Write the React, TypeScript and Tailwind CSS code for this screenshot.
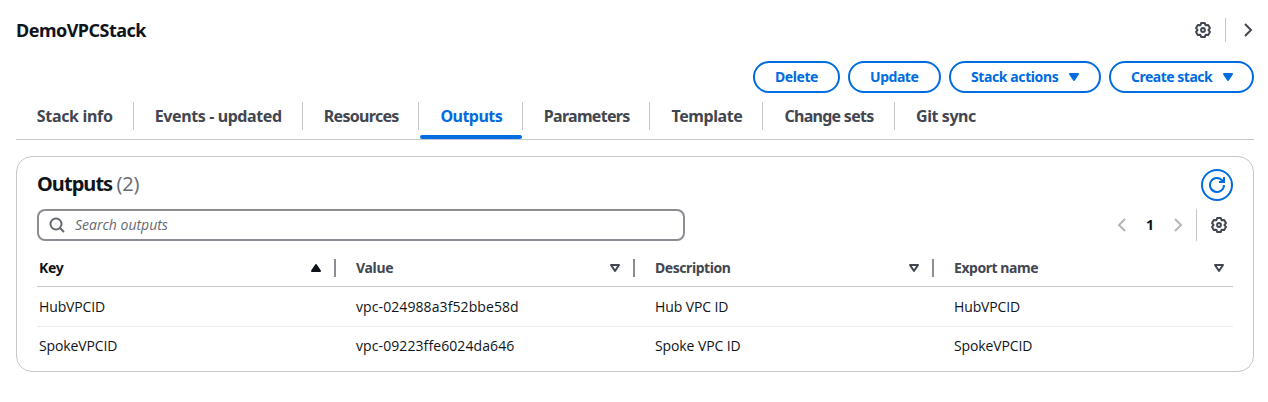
import type { ReactNode } from 'react';

function Gear() {
  return (
    <svg viewBox="0 0 16 16" className="size-4 shrink-0 text-[#424650]" fill="none" stroke="currentColor" strokeWidth="2" strokeLinejoin="round">
      <path d="M6.26 1h3.48l.96 2.32L13.18 3l1.74 3.02L13.4 8l1.52 1.98L13.18 13l-2.48-.32L9.74 15H6.26l-.96-2.32-2.48.32-1.74-3.02L2.6 8 1.08 6.02 2.82 3l2.48.32z" />
      <circle cx="8" cy="8" r="1.9" />
    </svg>
  );
}

function Chevron({ left, className }: { left?: boolean; className: string }) {
  return (
    <svg viewBox="0 0 16 16" className={`size-4 shrink-0 ${className}`} fill="none" stroke="currentColor" strokeWidth="2">
      <path d={left ? 'M11 2 5 8l6 6' : 'm5 2 6 6-6 6'} />
    </svg>
  );
}

function Refresh() {
  return (
    <svg viewBox="0 0 16 16" className="size-4" fill="none" stroke="currentColor" strokeWidth="2">
      <path d="M15 8a7 7 0 1 1-2.2-5.1L15 5" />
      <path d="M10 5h5V0" />
    </svg>
  );
}

function CaretDown() {
  return (
    <svg viewBox="0 0 16 16" className="size-4" fill="currentColor" stroke="currentColor" strokeWidth="2" strokeLinejoin="round">
      <path d="M4 5h8l-4 6z" />
    </svg>
  );
}

function SortMark({ asc }: { asc?: boolean }) {
  return (
    <svg viewBox="0 0 16 16" className="size-4 shrink-0" fill={asc ? 'currentColor' : 'none'} stroke="currentColor" strokeWidth="2" strokeLinejoin="round">
      <path d={asc ? 'M4 11h8L8 5z' : 'M4 5h8l-4 6z'} />
    </svg>
  );
}

function PillButton({ className, children }: { className: string; children: ReactNode }) {
  return (
    <button className={`flex h-8 items-center rounded-full border-2 border-[#006ce0] pl-5 text-sm font-[660] text-[#006ce0] ${className}`}>
      {children}
    </button>
  );
}

const tabs = [
  { label: 'Stack info', cls: 'w-[118px] pl-[20.8px] tracking-[-0.33px]' },
  { label: 'Events - updated', cls: 'w-[169px] pl-[20.8px] tracking-[-0.4px]' },
  { label: 'Resources', cls: 'w-[116px] pl-[20.8px] tracking-[-0.7px]' },
  { label: 'Outputs', cls: 'w-[104px] pl-[21.5px] tracking-[-0.55px]', active: true },
  { label: 'Parameters', cls: 'w-[127px] pl-[20.8px] tracking-[-0.7px]' },
  { label: 'Template', cls: 'w-[113px] pl-[21.5px] tracking-[-0.42px]' },
  { label: 'Change sets', cls: 'w-[132px] pl-[21.5px] tracking-[-0.73px]' },
  { label: 'Git sync', cls: 'w-[104px] pl-[21px] tracking-[-0.42px]' },
];

const columns = [
  { label: 'Key', cls: 'pl-[2px] tracking-[-0.3px]', asc: true },
  { label: 'Value', cls: 'pl-5 tracking-[-0.3px]' },
  { label: 'Description', cls: 'pl-5 tracking-[-0.44px]' },
  { label: 'Export name', cls: 'pl-5 tracking-[-0.45px]' },
];

const rows = [
  ['HubVPCID', 'vpc-024988a3f52bbe58d', 'Hub VPC ID', 'HubVPCID'],
  ['SpokeVPCID', 'vpc-09223ffe6024da646', 'Spoke VPC ID', 'SpokeVPCID'],
];

const cellStyles = [
  'pl-[2px] tracking-[-0.13px]',
  'pl-5 tracking-[0.09px]',
  'pl-5 tracking-[-0.1px]',
  'pl-5 tracking-[-0.13px]',
];

const grid = 'grid grid-cols-[299px_299px_299px_299px]';

export default function App() {
  return (
    <div className="flex h-[402px] w-[1268px] flex-col bg-white pt-[18px] pr-[14px] pl-4 font-['Noto_Sans',sans-serif] text-[#0f141a]">
      <header className="flex h-6 items-center">
        <h1 className="-mt-px flex-1 text-lg leading-6 font-[660] tracking-[-0.52px]">DemoVPCStack</h1>
        <Gear />
        <div className="ml-[14px] h-6 w-px bg-[#c6c6cd]" />
        <Chevron className="ml-[14px] -mr-0.5 text-[#424650]" />
      </header>

      <div className="mt-[19px] flex h-8 justify-end gap-2">
        <PillButton className="w-[87px] tracking-[-0.42px]">Delete</PillButton>
        <PillButton className="w-[93px] tracking-[-0.45px]">Update</PillButton>
        <PillButton className="w-[152px] gap-2 tracking-[-0.4px]">
          Stack actions <CaretDown />
        </PillButton>
        <PillButton className="w-[145px] gap-2 tracking-[-0.5px]">
          Create stack <CaretDown />
        </PillButton>
      </div>

      <nav className="mt-[9px] flex h-[38px] border-b border-[#c6c6cd]">
        {tabs.map((t, i) => (
          <div
            key={t.label}
            className={`relative h-7 text-base leading-7 font-[660] whitespace-nowrap ${t.cls} ${t.active ? 'text-[#006ce0]' : 'text-[#424650]'} ${i < tabs.length - 1 ? 'border-r border-[#c6c6cd]' : ''}`}
          >
            {t.label}
            {t.active && <span className="absolute top-[33px] right-0 left-px h-1 rounded-xs bg-[#006ce0]" />}
          </div>
        ))}
      </nav>

      <section className="mt-4 flex h-[216px] flex-col rounded-2xl border border-[#c6c6cd] px-5 pt-3">
        <div className="flex h-8 items-center justify-between">
          <h2 className="-mt-0.5 text-xl leading-6 font-[660] tracking-[-0.95px]">
            Outputs <span className="font-['Open_Sans',sans-serif] font-normal tracking-[-0.1px] text-[#656871]">(2)</span>
          </h2>
          <button className="flex size-8 items-center justify-center rounded-full border-2 border-[#006ce0] text-[#006ce0]">
            <Refresh />
          </button>
        </div>

        <div className="mt-2 flex h-8 items-center">
          <div className="flex h-8 w-[648px] items-center rounded-lg border-2 border-[#8c8c94] pl-[10px] text-[#656871]">
            <svg viewBox="0 0 16 16" className="size-4" fill="none" stroke="currentColor" strokeWidth="2">
              <circle cx="7" cy="7" r="5.5" />
              <path d="m11 11 4 4" />
            </svg>
            <span className="ml-[10px] font-['Open_Sans',sans-serif] text-sm italic">Search outputs</span>
          </div>
          <Chevron left className="ml-auto text-[#b4b4bb]" />
          <span className="w-10 text-center text-sm font-bold">1</span>
          <Chevron className="text-[#b4b4bb]" />
          <div className="ml-[10px] h-8 w-px bg-[#c6c6cd]" />
          <div className="ml-[14px] mr-1.5 flex">
            <Gear />
          </div>
        </div>

        <div className={`mt-2 h-[38px] border-b border-[#c6c6cd] ${grid}`}>
          {columns.map((c, i) => (
            <div key={c.label} className="flex h-[38px] items-center">
              <div className={`flex-1 text-sm font-[660] ${c.cls} ${c.asc ? '' : 'text-[#424650]'}`}>{c.label}</div>
              <div className={c.asc ? '' : 'text-[#424650]'}>
                <SortMark asc={c.asc} />
              </div>
              <div className={`h-[18px] ${i < 3 ? 'ml-[10px] w-0.5 bg-[#8c8c94]' : 'ml-1.5'}`} />
            </div>
          ))}
        </div>
        {rows.map((r, i) => (
          <div key={r[0]} className={`${grid} items-center text-sm font-['Open_Sans',sans-serif] ${i === 0 ? 'h-10 border-b border-[#ebebf0]' : 'h-[38px]'}`}>
            {r.map((v, j) => (
              <div key={j} className={cellStyles[j]}>
                {v}
              </div>
            ))}
          </div>
        ))}
      </section>
    </div>
  );
}
